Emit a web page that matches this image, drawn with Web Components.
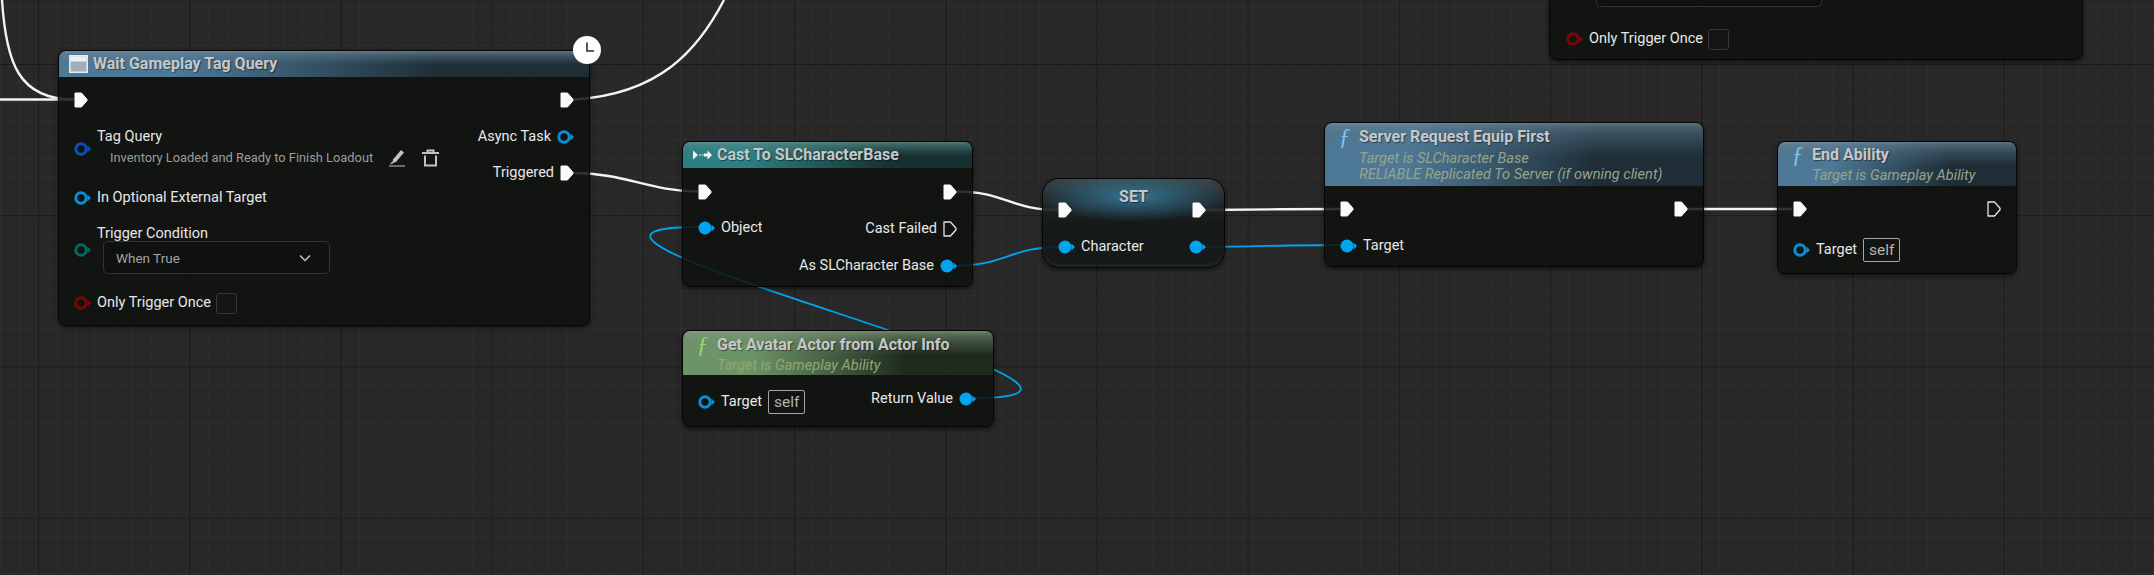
<!DOCTYPE html>
<html>
<head>
<meta charset="utf-8">
<title>Blueprint graph</title>
<style>
  html, body { margin: 0; height: 100%; overflow: hidden; background: #282828; }
  .fn { font: italic 23px/18px "Liberation Serif", serif; }
</style>
</head>
<body>

<ue-graph>
  <ue-wires></ue-wires>

  <!-- Wait Gameplay Tag Query -->
  <ue-node style="--x:58px;--y:50px;--w:532px;--h:276px;--hh:26px;--lgap:14px;--rgap:10.5px;--ltop:10px;--rtop:10px">
    <svg slot="icon" width="19" height="18" viewBox="0 0 19 18"><rect x=".75" y=".75" width="17.5" height="16.5" fill="#9fb0bd" stroke="#e8ecee" stroke-width="1.5"/><rect x="1.5" y="1.5" width="16" height="5" fill="#eef1f2"/></svg>
    <span slot="title">Wait Gameplay Tag Query</span>
    <ue-clock slot="badge"></ue-clock>

    <ue-pin slot="left" kind="exec"></ue-pin>
    <ue-pin slot="left" color="#0b50b4">
      <ue-field>
        Tag Query
        <span slot="value">Inventory Loaded and Ready to Finish Loadout</span>
      </ue-field>
    </ue-pin>
    <ue-pin slot="left" color="#0a8ed4">In Optional External Target</ue-pin>
    <ue-pin slot="left" color="#006a5c"><ue-dropdown label="Trigger Condition" value="When True"></ue-dropdown></ue-pin>
    <ue-pin slot="left" color="#7d0505" style="margin-top:2px">Only Trigger Once <ue-check></ue-check></ue-pin>

    <ue-pin slot="right" side="right" kind="exec"></ue-pin>
    <ue-pin slot="right" side="right" color="#0a8ed4">Async Task</ue-pin>
    <ue-pin slot="right" side="right" kind="exec">Triggered</ue-pin>
  </ue-node>

  <!-- Cast To SLCharacterBase -->
  <ue-node style="--x:682px;--y:141px;--w:291px;--h:146px;--hh:26px;--hd:#2c8083;--hd2:#16302f;--hdt:rgba(70,125,125,.7);--lgap:10px;--rgap:11px;--ltop:11px;--rtop:11px">
    <svg slot="icon" width="19" height="12" viewBox="0 0 19 12"><path d="M0 1.5 5 6 0 10.5z" fill="#f2f2f2"/><path d="M6.5 5h1.5v2H6.5zm2.5 0h1.5v2H9z" fill="#bcbcbc"/><path d="M11 4.5h3.5V1.5L19 6l-4.500 4.500V7.500H11z" fill="#f2f2f2"/></svg>
    <span slot="title">Cast To SLCharacterBase</span>

    <ue-pin slot="left" kind="exec"></ue-pin>
    <ue-pin slot="left" color="#00a4ef" filled>Object</ue-pin>

    <ue-pin slot="right" side="right" kind="exec"></ue-pin>
    <ue-pin slot="right" side="right" kind="exec" hollow>Cast Failed</ue-pin>
    <ue-pin slot="right" side="right" color="#00a4ef" filled>As SLCharacter Base</ue-pin>
  </ue-node>

  <!-- Get Avatar Actor from Actor Info -->
  <ue-node style="--x:682px;--y:330px;--w:312px;--h:97px;--hh:44px;--pt:5px;--subm:3px;--hd:#6d9468;--hd2:#1e2a1e;--hdt:rgba(115,140,110,.7);--sub:#93a672;--ltop:14px;--rtop:11px;--pr:17px">
    <span slot="icon" class="fn" style="color:#93d96f">ƒ</span>
    <span slot="title">Get Avatar Actor from Actor Info</span>
    <span slot="sub">Target is Gameplay Ability</span>

    <ue-pin slot="left" color="#0a8ed4">Target <ue-literal>self</ue-literal></ue-pin>
    <ue-pin slot="right" side="right" color="#00a4ef" filled>Return Value</ue-pin>
  </ue-node>

  <!-- SET -->
  <ue-node compact style="--x:1042px;--y:178px;--w:183px;--h:90px;--lgap:11px;--rgap:11px;--ltop:18px;--rtop:18px;--pr:18px">
    <span slot="title">SET</span>

    <ue-pin slot="left" kind="exec"></ue-pin>
    <ue-pin slot="left" color="#00a4ef" filled>Character</ue-pin>

    <ue-pin slot="right" side="right" kind="exec"></ue-pin>
    <ue-pin slot="right" side="right" color="#00a4ef" filled></ue-pin>
  </ue-node>

  <!-- Server Request Equip First -->
  <ue-node style="--x:1324px;--y:122px;--w:380px;--h:145px;--hh:63px;--pt:5px;--subm:4px;--lgap:11px;--ltop:10px;--rtop:10px">
    <span slot="icon" class="fn" style="color:#7cc4f4">ƒ</span>
    <span slot="title">Server Request Equip First</span>
    <span slot="sub">Target is SLCharacter Base<br>RELIABLE Replicated To Server (if owning client)</span>

    <ue-pin slot="left" kind="exec"></ue-pin>
    <ue-pin slot="left" color="#00a4ef" filled>Target</ue-pin>

    <ue-pin slot="right" side="right" kind="exec"></ue-pin>
  </ue-node>

  <!-- End Ability -->
  <ue-node style="--x:1777px;--y:141px;--w:240px;--h:133px;--hh:44px;--pt:4px;--subm:3px;--lgap:15px;--ltop:10px;--rtop:10px">
    <span slot="icon" class="fn" style="color:#7cc4f4">ƒ</span>
    <span slot="title">End Ability</span>
    <span slot="sub">Target is Gameplay Ability</span>

    <ue-pin slot="left" kind="exec"></ue-pin>
    <ue-pin slot="left" color="#0a8ed4">Target <ue-literal>self</ue-literal></ue-pin>

    <ue-pin slot="right" side="right" kind="exec" hollow></ue-pin>
  </ue-node>

  <!-- bottom of a node cut off by the top of the view -->
  <ue-node headless style="--x:1549px;--y:-40px;--w:534px;--h:100px;--lgap:19px;--ltop:22px;--px:16px">
    <ue-dropdown slot="left" style="margin-left:30px" cut></ue-dropdown>
    <ue-pin slot="left" color="#7d0505">Only Trigger Once <ue-check></ue-check></ue-pin>
  </ue-node>
</ue-graph>

<script>
class UeGraph extends HTMLElement {
  constructor() {
    super();
    this.attachShadow({ mode: "open" }).innerHTML = `
    <style>
      :host {
        display: block;
        position: relative;
        width: 2154px;
        height: 575px;
        overflow: hidden;
        font: 14.5px/18px Roboto, "Liberation Sans", sans-serif;
        color: #e8e8e8;
        background-color: #282828;
        background-image:
          linear-gradient(to right, #191919 1px, transparent 1px),
          linear-gradient(to bottom, #191919 1px, transparent 1px),
          linear-gradient(to right, #2e2e2e 1px, transparent 1px),
          linear-gradient(to bottom, #2e2e2e 1px, transparent 1px);
        background-size: 151.2px 151.2px, 151.2px 151.2px, 18.9px 18.9px, 18.9px 18.9px;
        background-position: 38px 0, 0 64px, 0 0, 0 7px;
      }
    </style>
    <slot></slot>`;
  }
}

class UeWires extends HTMLElement {
  constructor() {
    super();
    const white = [
      "M0 99.500H74",
      "M2 0C6 62 18 99.500 74 99.500",
      "M574 99.500C660 94 698 50 724 0",
      "M574 173C625 173 650 191.500 698 191.500",
      "M957 191.500C1005 191.500 1010 210 1059 210",
      "M1206 210C1260 209.500 1290 209 1340 209",
      "M1687 209H1792"
    ];
    const blue = [
      "M954 266C1005 266 1010 247 1059 247",
      "M1203 247C1260 246.500 1290 245 1340 245",
      "M973 398C1213 398 458 227 698 227"
    ];
    const paths = (list, attrs) => list.map(d => `<path d="${d}" ${attrs}/>`).join("");
    this.attachShadow({ mode: "open" }).innerHTML = `
    <style>
      :host { position: absolute; left: 0; top: 0; width: 2154px; height: 575px; }
      svg { display: block; }
    </style>
    <svg width="2154" height="575" fill="none">
      ${paths(white, 'stroke="#f4f4f4" stroke-width="2.400"')}
      ${paths(blue, 'stroke="#00a4ef" stroke-width="1.800"')}
    </svg>`;
  }
}

class UeNode extends HTMLElement {
  constructor() {
    super();
    this.attachShadow({ mode: "open" }).innerHTML = `
    <style>
      :host {
        position: absolute;
        left: var(--x);
        top: var(--y);
        width: var(--w);
        height: var(--h);
        box-sizing: border-box;
        display: flex;
        flex-direction: column;
        background: rgba(14, 16, 14, .85);
        border: 1px solid #050505;
        border-radius: 8px;
        box-shadow: 0 2px 5px rgba(0, 0, 0, .55);
      }
      header {
        flex: none;
        box-sizing: border-box;
        height: var(--hh, 26px);
        display: flex;
        gap: 5px;
        padding: var(--pt, 4px) 10px 0;
        border-radius: 7px 7px 0 0;
        background:
          linear-gradient(to bottom, rgba(255, 255, 255, .14) 0, rgba(255, 255, 255, .05) 3px, transparent 10px),
          linear-gradient(to bottom, var(--hdt, rgba(85, 115, 135, .7)) 0, transparent 55%),
          linear-gradient(to right, var(--hd, #4d7997) 0, var(--hd, #4d7997) 22%, var(--hd2, #1e2d36) 72%, var(--hd2, #1e2d36) 100%);
      }
      .icon { flex: none; width: 19px; height: 18px; display: flex; align-items: center; justify-content: center; }
      .title { font-weight: 700; font-size: 16px; color: #c4c8cb; text-shadow: 1px 1px 1px rgba(0, 0, 0, .45); white-space: nowrap; }
      .sub { margin-top: var(--subm, 3px); font-style: italic; font-size: 14.600px; line-height: 16px; color: var(--sub, #98a48a); white-space: nowrap; }
      .body { flex: 1; display: flex; justify-content: space-between; }
      .col { display: flex; flex-direction: column; }
      .left { gap: var(--lgap, 10px); padding: var(--ltop, 9px) 0 0 var(--px, 15px); }
      .right { gap: var(--rgap, 11px); padding: var(--rtop, 9px) var(--pr, 15px) 0 0; }
      .badge { position: absolute; right: -12px; top: -15px; }

      :host([headless]) header { display: none; }

      :host([compact]) { border-radius: 17px; background: rgba(20, 23, 23, .9); box-shadow: 0 2px 5px rgba(0, 0, 0, .55), inset 0 -3px 3px rgba(255, 255, 255, .05); }
      :host([compact]) header {
        position: absolute;
        left: 0; right: 0; top: 0;
        height: 46px;
        padding: 9px 0 0;
        border-radius: 16px 16px 0 0;
        justify-content: center;
        background: radial-gradient(ellipse 55% 55% at 50% 38%, rgba(54, 130, 168, .85), rgba(54, 130, 168, 0)),
          linear-gradient(to bottom, rgba(86, 96, 99, .6) 0, rgba(60, 70, 74, .3) 40%, transparent 100%);
      }
      :host([compact]) .icon { display: none; }
      :host([compact]) .body { position: relative; }
    </style>
    <header>
      <div class="icon"><slot name="icon"></slot></div>
      <div>
        <div class="title"><slot name="title"></slot></div>
        <div class="sub"><slot name="sub"></slot></div>
      </div>
    </header>
    <div class="badge"><slot name="badge"></slot></div>
    <div class="body">
      <div class="col left"><slot name="left"></slot></div>
      <div class="col right"><slot name="right"></slot></div>
    </div>`;
  }
}

class UePin extends HTMLElement {
  constructor() {
    super();
    this.attachShadow({ mode: "open" });
  }
  connectedCallback() {
    const color = this.getAttribute("color") || "#fff";
    let glyph;
    if (this.getAttribute("kind") === "exec") {
      const paint = this.hasAttribute("hollow")
        ? 'fill="none" stroke="#e4e4e4" stroke-width="1.300"'
        : 'fill="#fafafa" stroke="#fafafa" stroke-width="1"';
      glyph = `<svg width="14" height="16" viewBox="0 0 14 16"><path d="M1 1h6.500L13 7.300v1.400L7.500 15H1z" stroke-linejoin="round" ${paint}/></svg>`;
    } else {
      const dot = this.hasAttribute("filled")
        ? `<circle cx="7" cy="7" r="6.500" fill="${color}"/>`
        : `<circle cx="7" cy="7" r="5.200" fill="none" stroke="${color}" stroke-width="3"/>`;
      glyph = `<svg width="17" height="14" viewBox="0 0 17 14">${dot}<path d="M13.500 3.500 17 7l-3.500 3.500z" fill="${color}"/></svg>`;
    }
    this.shadowRoot.innerHTML = `
    <style>
      :host { display: flex; align-items: center; gap: 6px; min-height: 26px; white-space: nowrap; }
      :host([side="right"]) { flex-direction: row-reverse; }
      svg { flex: none; display: block; }
      .label { display: flex; align-items: center; gap: 6px; }
    </style>
    ${glyph}
    <div class="label"><slot></slot></div>`;
  }
}

class UeField extends HTMLElement {
  constructor() {
    super();
    this.attachShadow({ mode: "open" }).innerHTML = `
    <style>
      :host { display: block; padding: 1px 0 3px; }
      .value { display: flex; align-items: center; height: 20px; margin-top: 2px; padding-left: 13px; font-size: 12.850px; color: #9c9c9c; }
      svg { display: block; flex: none; }
    </style>
    <div><slot></slot></div>
    <div class="value">
      <slot name="value"></slot>
      <svg style="margin-left:16px" width="16" height="18" viewBox="0 0 16 18" fill="#c2c2c2"><path d="M4 10.500 12 1l3 2.500-8 9.500-3.500 1.200z"/><path d="M0 16.500h16v1H0zM3.200 12.200 1 15.500l3.300-1.300z"/></svg>
      <svg style="margin-left:17px" width="17" height="18" viewBox="0 0 17 18" fill="none" stroke="#c2c2c2" stroke-width="2"><path d="M0 4h17M5.500 3.500V1.500h6v2M3 6.500V16.500h11V6.500"/></svg>
    </div>`;
  }
}

class UeDropdown extends HTMLElement {
  constructor() {
    super();
    this.attachShadow({ mode: "open" });
  }
  connectedCallback() {
    const label = this.getAttribute("label");
    const value = this.getAttribute("value");
    this.shadowRoot.innerHTML = `
    <style>
      :host { display: block; }
      :host([cut]) { height: 24px; }
      :host([cut]) .box { width: 226px; height: 24px; margin: 0; border-top: 0; border-radius: 0 0 5px 5px; }
      .label { line-height: 17px; }
      .box {
        box-sizing: border-box;
        width: 227px;
        height: 33px;
        margin: -1px 0 0 6px;
        padding: 0 18px 0 12px;
        display: flex;
        align-items: center;
        justify-content: space-between;
        background: #0f1010;
        border: 1px solid #333;
        border-radius: 5px;
        font-size: 13.500px;
        color: #a4a4a4;
      }
    </style>
    ${label ? `<div class="label">${label}</div>` : ""}
    <div class="box">
      ${value ? `<span>${value}</span>
      <svg width="12" height="8" viewBox="0 0 12 8" fill="none" stroke="#c4c4c4" stroke-width="1.500"><path d="M1 1.500 6 6.500 11 1.500"/></svg>` : ""}
    </div>`;
  }
}

class UeCheck extends HTMLElement {
  constructor() {
    super();
    this.attachShadow({ mode: "open" }).innerHTML = `
    <style>
      :host { display: block; box-sizing: border-box; width: 21px; height: 21px; margin-left: -1px; background: #141514; border: 1px solid #363636; border-radius: 3px; }
    </style>`;
  }
}

class UeLiteral extends HTMLElement {
  constructor() {
    super();
    this.attachShadow({ mode: "open" }).innerHTML = `
    <style>
      :host { display: block; box-sizing: border-box; height: 24px; padding: 0 5px; line-height: 22px; font-size: 15.500px; color: #b4b4b4; border: 1px solid #a6a6a6; border-radius: 2px; }
    </style>
    <slot></slot>`;
  }
}

class UeClock extends HTMLElement {
  constructor() {
    super();
    this.attachShadow({ mode: "open" }).innerHTML = `
    <style>
      :host { display: block; width: 28px; height: 28px; }
      svg { display: block; }
    </style>
    <svg width="28" height="28" viewBox="0 0 28 28"><circle cx="14" cy="14" r="14" fill="#fff"/><path d="M14 6.500V15H21" fill="none" stroke="#2b2b2b" stroke-width="1.600"/></svg>`;
  }
}

[["ue-graph", UeGraph], ["ue-wires", UeWires], ["ue-node", UeNode], ["ue-pin", UePin],
 ["ue-field", UeField], ["ue-dropdown", UeDropdown], ["ue-check", UeCheck],
 ["ue-literal", UeLiteral], ["ue-clock", UeClock]].forEach(([tag, cls]) => customElements.define(tag, cls));
</script>
</body>
</html>
